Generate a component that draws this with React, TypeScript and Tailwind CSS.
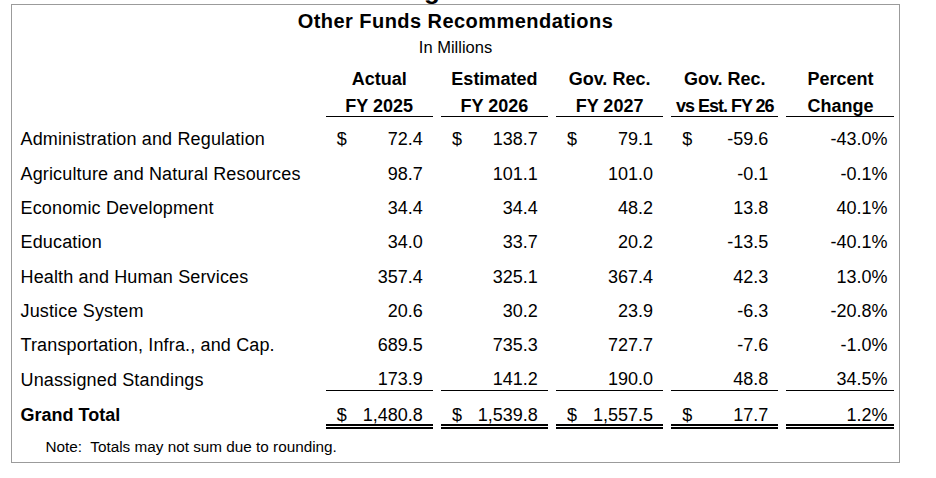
const rows = [
  { label: "Administration and Regulation", dollar: true, v: ["72.4", "138.7", "79.1", "-59.6", "-43.0%"] },
  { label: "Agriculture and Natural Resources", v: ["98.7", "101.1", "101.0", "-0.1", "-0.1%"] },
  { label: "Economic Development", v: ["34.4", "34.4", "48.2", "13.8", "40.1%"] },
  { label: "Education", v: ["34.0", "33.7", "20.2", "-13.5", "-40.1%"] },
  { label: "Health and Human Services", v: ["357.4", "325.1", "367.4", "42.3", "13.0%"] },
  { label: "Justice System", v: ["20.6", "30.2", "23.9", "-6.3", "-20.8%"] },
  { label: "Transportation, Infra., and Cap.", v: ["689.5", "735.3", "727.7", "-7.6", "-1.0%"] },
];

const headers = [
  ["Actual", "FY 2025"],
  ["Estimated", "FY 2026"],
  ["Gov. Rec.", "FY 2027"],
  ["Gov. Rec.", "vs Est. FY 26"],
  ["Percent", "Change"],
];

const grid = "grid grid-cols-[297px_107px_107px_107px_107px_108px] gap-x-[8.2px]";

function Cell({ value, dollar, last }: { value: string; dollar?: boolean; last?: boolean }) {
  return (
    <div className={`flex items-center justify-between pl-[11px] ${last ? "pr-[7px]" : "pr-[10px]"}`}>
      <span>{dollar && !last ? "$" : ""}</span>
      <span>{value}</span>
    </div>
  );
}

export default function App() {
  return (
    <div className="w-[936px] h-[478px] bg-white overflow-hidden text-black font-['Liberation_Sans',Arial,sans-serif]">
      {/* tail of the heading above, cut off by the page */}
      <div className="h-[4px] overflow-hidden pl-[424px]">
        <div className="-mt-[23px] text-[26px] leading-none font-bold">g</div>
      </div>

      <div className="ml-[11px] w-[889px] h-[458.5px] border-[1.5px] border-[#9b9b9b] pl-[8.5px]">
        <div className="pt-[2.5px] text-center pr-[8.5px]">
          <div className="text-[20px] leading-[26px] font-bold tracking-[0.45px]">Other Funds Recommendations</div>
          <div className="mt-[2px] text-[16.5px] leading-[22px]">In Millions</div>
        </div>

        {/* column headers */}
        <div className={`${grid} mt-[7.7px] text-[18px] font-bold`}>
          <div />
          {headers.map(([a, b], i) => (
            <div key={i} className="text-center border-b-[1.5px] border-black">
              <div className="leading-[28px]">{a}</div>
              <div className={`mt-[3.3px] leading-[20px] ${i === 3 ? "tracking-[-1px]" : ""}`}>{b}</div>
            </div>
          ))}
        </div>

        <div className="mt-[5.35px] text-[18px]">
          {rows.map((r) => (
            <div key={r.label} className={`${grid} h-[34.3px] items-center`}>
              <div className="tracking-[0.15px]">{r.label}</div>
              {r.v.map((v, i) => (
                <Cell key={i} value={v} dollar={r.dollar} last={i === 4} />
              ))}
            </div>
          ))}

          <div className={`${grid} h-[34.3px] items-center`}>
            <div className="tracking-[0.15px]">Unassigned Standings</div>
            {["173.9", "141.2", "190.0", "48.8", "34.5%"].map((v, i) => (
              <div
                key={i}
                className={`h-[21px] flex items-center justify-end border-b-[1.5px] border-black ${i === 4 ? "pr-[7px]" : "pr-[10px]"}`}
              >
                {v}
              </div>
            ))}
          </div>

          <div className={`${grid} leading-[18px]`}>
            <div className="pt-[8.5px] font-bold">Grand Total</div>
            {["1,480.8", "1,539.8", "1,557.5", "17.7", "1.2%"].map((v, i) => (
              <div
                key={i}
                className={`flex justify-between pt-[8.5px] pl-[11px] border-b-[5px] border-double border-black ${i === 4 ? "pr-[7px]" : "pr-[10px]"}`}
              >
                <span>{i < 4 ? "$" : ""}</span>
                <span>{v}</span>
              </div>
            ))}
          </div>
        </div>

        <div className="mt-[7px] pl-[25px] text-[15.3px] leading-[22px]">
          Note:&nbsp; Totals may not sum due to rounding.
        </div>
      </div>
    </div>
  );
}
